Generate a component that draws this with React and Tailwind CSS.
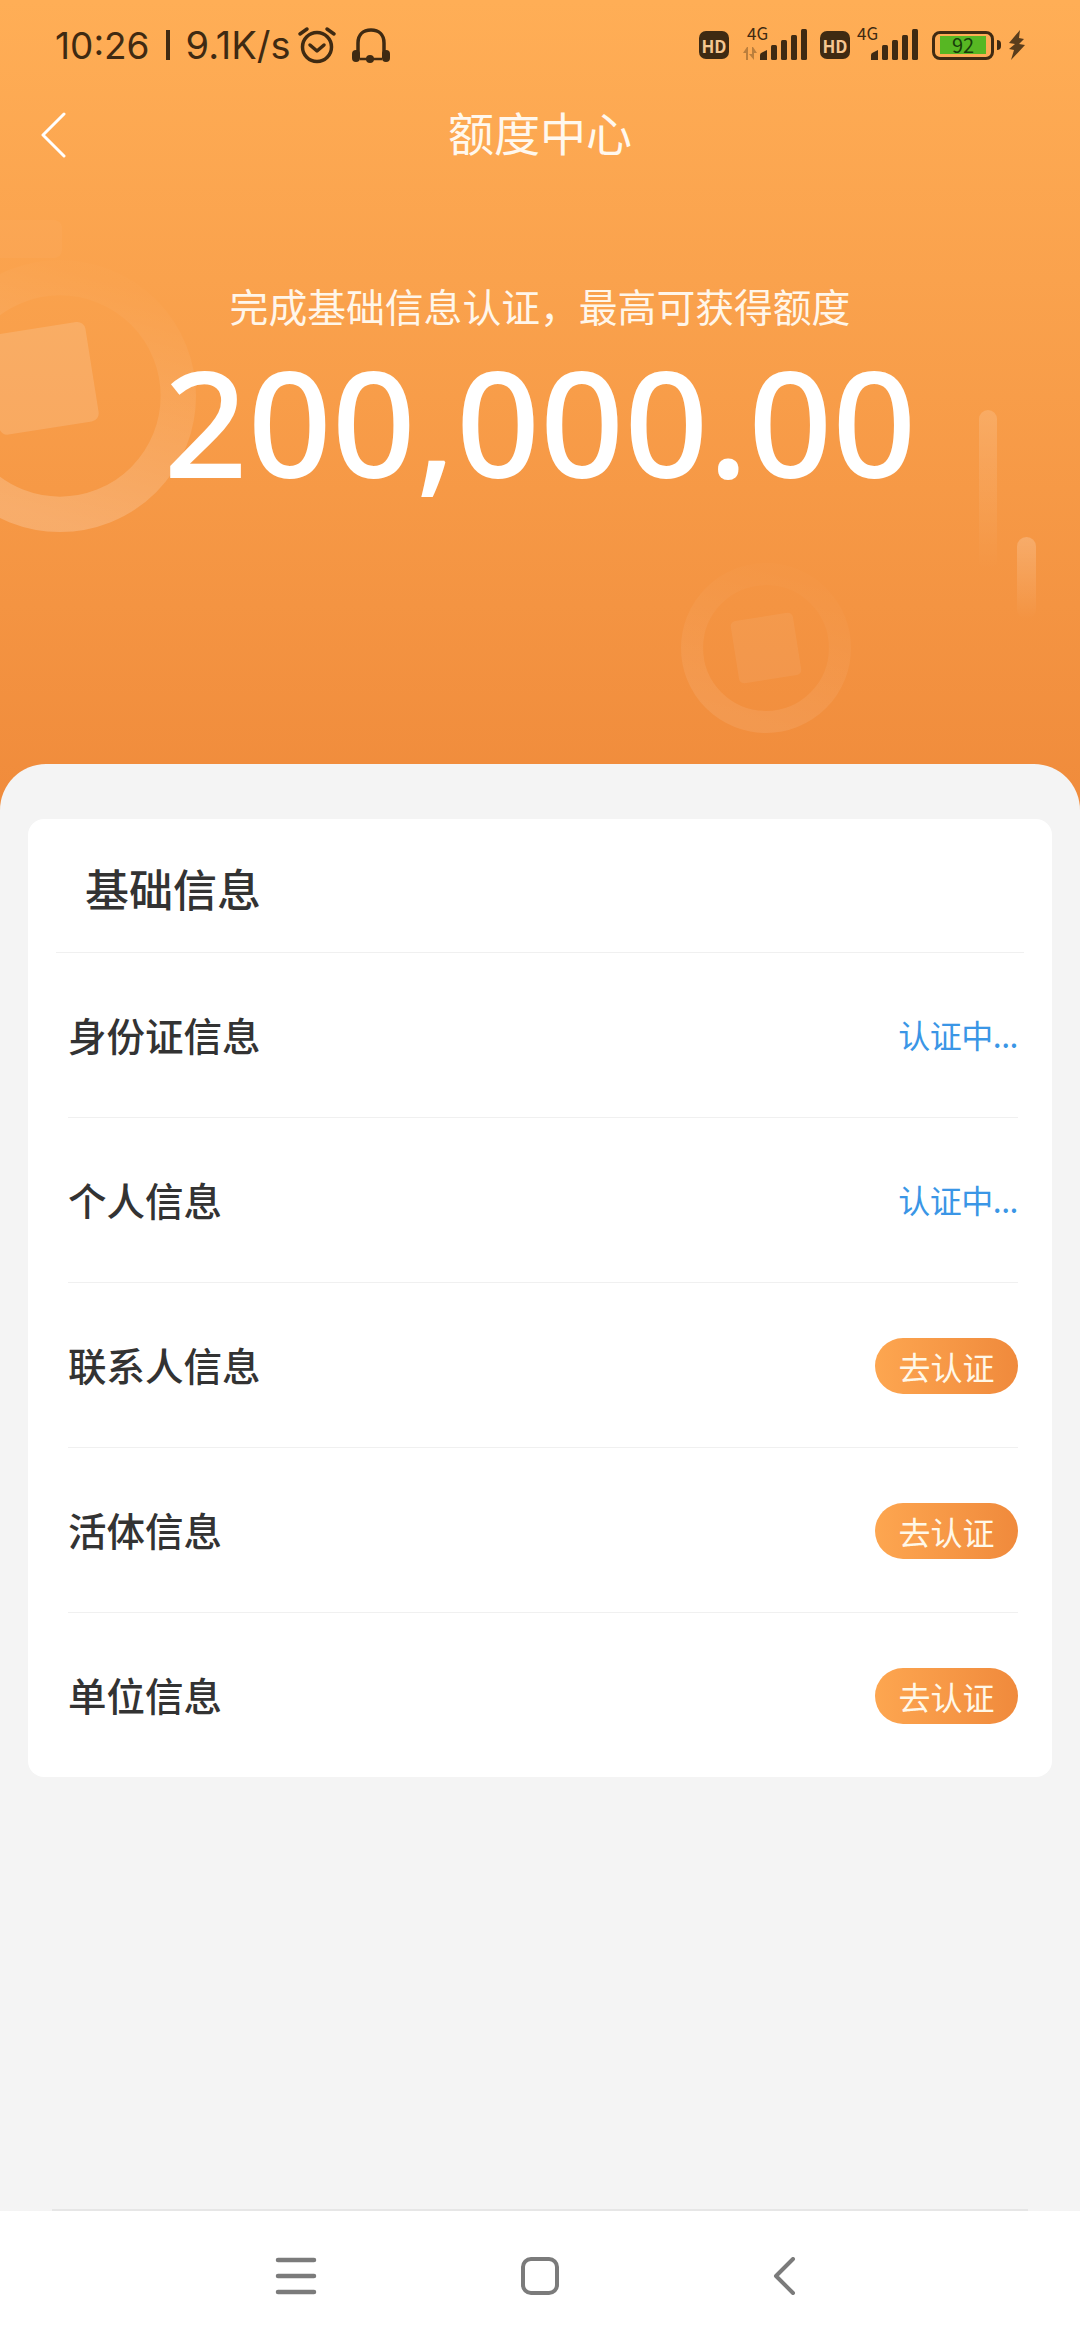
import { Fragment } from "react";

const rows = [
  { name: "身份证信息", pending: true },
  { name: "个人信息", pending: true },
  { name: "联系人信息", pending: false },
  { name: "活体信息", pending: false },
  { name: "单位信息", pending: false },
];

function Signal({ className }) {
  return (
    <svg className={className} width="48" height="31" viewBox="0 0 48 31" fill="#3f2a12">
      <path d="M1 31v-5q0-2 2-2.500l5-2.500v10z" />
      <rect x="12" y="16" width="6" height="15" rx="1.500" />
      <rect x="22" y="11" width="6" height="20" rx="1.500" />
      <rect x="32" y="6" width="6" height="25" rx="1.500" />
      <rect x="42" y="0" width="6" height="31" rx="1.500" />
    </svg>
  );
}

function HdBadge() {
  return (
    <div className="flex h-[28px] w-[30px] items-center justify-center rounded-[7px] bg-[#3f2a12] text-[17px] leading-none font-bold text-[#f5c690]">
      HD
    </div>
  );
}

function Coin({ className, id, opacity, squareAt }) {
  return (
    <svg className={className} viewBox="0 0 200 200" fill="none">
      <defs>
        <linearGradient id={id} x1="0.7" y1="0" x2="0.4" y2="1">
          <stop offset="0" stopColor="#fff" stopOpacity="0.01" />
          <stop offset="1" stopColor="#fff" stopOpacity={opacity} />
        </linearGradient>
      </defs>
      <circle cx="100" cy="100" r="87" stroke={`url(#${id})`} strokeWidth="26" />
      <rect
        x={squareAt}
        y={squareAt}
        width="74"
        height="74"
        rx="6"
        fill="#fff"
        fillOpacity={opacity * 0.7}
        transform={`rotate(-9 ${squareAt + 37} ${squareAt + 37})`}
      />
    </svg>
  );
}

export default function App() {
  return (
    <main
      className="flex h-[2340px] w-[1080px] flex-col overflow-hidden bg-[#f4f4f4]"
      style={{ fontFamily: '"Noto Sans CJK SC", "Noto Sans", sans-serif' }}
    >
      <section className="relative h-[812px] shrink-0 overflow-hidden bg-gradient-to-b from-[#ffae56] to-[#f08b3b]">
        {/* decoration behind the amount */}
        <div className="absolute top-[220px] left-0 h-[38px] w-[62px] rounded-r-lg bg-white/[0.03]" />
        <Coin id="coinA" opacity={0.2} squareAt={50} className="absolute top-[260px] left-[-76px] h-[272px] w-[272px]" />
        <Coin id="coinB" opacity={0.09} squareAt={63} className="absolute top-[563px] left-[681px] h-[170px] w-[170px]" />
        <div className="absolute top-[410px] left-[979px] h-[160px] w-[18px] rounded-full bg-gradient-to-b from-white/15 to-white/0" />
        <div className="absolute top-[537px] left-[1017px] h-[82px] w-[19px] rounded-full bg-gradient-to-b from-white/20 to-white/0" />

        <div className="relative flex h-[90px] items-center justify-between pr-[54px] pl-[55px] text-[#3f2a12]">
          <div className="flex items-center">
            <span className="text-[37px] leading-none" style={{ fontFamily: "Inter, sans-serif" }}>
              10:26
            </span>
            <span className="mx-[16px] h-[30px] w-[4px] bg-[#3f2a12]" />
            <span className="text-[38px] leading-none" style={{ fontFamily: "Inter, sans-serif" }}>
              9.1K/s
            </span>
            <svg className="ml-[6px]" width="40" height="38" viewBox="0 0 40 38" fill="none" stroke="#3f2a12" strokeWidth="3.500" strokeLinecap="round" strokeLinejoin="round">
              <circle cx="20" cy="21" r="14.500" />
              <path d="M13 19l7 6 7-6" />
              <path d="M3 8l7-5M37 8l-7-5" />
            </svg>
            <svg className="ml-[14px]" width="40" height="36" viewBox="0 0 40 36" fill="none">
              <path d="M7 27V16C7 8 12 3 20 3s13 5 13 13v11" stroke="#3f2a12" strokeWidth="3.500" />
              <rect x="1" y="23" width="8" height="12" rx="4" fill="#3f2a12" />
              <rect x="31" y="23" width="8" height="12" rx="4" fill="#3f2a12" />
              <path d="M9 32h22" stroke="#3f2a12" strokeWidth="2.500" />
              <circle cx="19" cy="32" r="4" fill="#3f2a12" />
            </svg>
          </div>

          <div className="flex items-center">
            <HdBadge />
            <div className="relative ml-[13px] h-[34px] w-[65px]">
              <span className="absolute top-[-4px] left-[5px] text-[17px] leading-none">4G</span>
              <svg className="absolute top-[19px] left-0" width="16" height="13" viewBox="0 0 16 13" fill="#3f2a12" fillOpacity="0.35">
                <path d="M4 13V6H1l4-6v0h1v13zM10 0v7H7l0 0 5 6h0V6h3L11 0z" />
              </svg>
              <Signal className="absolute top-[1px] left-[17px]" />
            </div>
            <div className="ml-[13px]">
              <HdBadge />
            </div>
            <div className="relative ml-[7px] h-[34px] w-[60px]">
              <span className="absolute top-[-4px] left-0 text-[17px] leading-none">4G</span>
              <Signal className="absolute top-[1px] left-[13px]" />
            </div>
            <div className="ml-[15px] flex items-center">
              <div className="flex h-[29px] w-[62px] items-center justify-center rounded-[8px] border-[3px] border-[#3f2a12]">
                <div className="flex h-[18px] w-[46px] items-center justify-center bg-[#57b723] text-[20px] leading-none text-[#173d0a]">
                  92
                </div>
              </div>
              <div className="ml-[3px] h-[10px] w-[4px] rounded-r-sm bg-[#3f2a12]" />
            </div>
            <svg className="ml-[7px]" width="18" height="30" viewBox="0 0 18 30" fill="#5a3d1c">
              <path d="M12 0L1 13l6 1-6 5 5 1-3 10 14-15-6-1 5-5-5-1z" />
            </svg>
          </div>
        </div>

        <div className="relative flex h-[90px] items-center justify-center pb-[8px]">
          <svg className="absolute top-[22px] left-[40px]" width="26" height="46" viewBox="0 0 26 46" fill="none" stroke="#fff" strokeWidth="3" strokeLinecap="round" strokeLinejoin="round">
            <path d="M24 2L3 23l21 21" />
          </svg>
          <h1 className="text-[46px] leading-none font-normal text-[#fff8ee]">额度中心</h1>
        </div>

        <div className="relative mt-[106px] flex flex-col items-center">
          <p className="text-[38.800px] leading-none font-normal text-[#fff6ea]">完成基础信息认证，最高可获得额度</p>
          <p className="mt-[23px] text-[147px] leading-none font-medium text-white" style={{ fontFamily: '"Noto Sans", sans-serif' }}>
            200,000.00
          </p>
        </div>
      </section>

      <section className="z-10 mt-[-48px] flex flex-1 flex-col rounded-t-[46px] bg-[#f4f4f4] px-[28px] pt-[55px]">
        <div className="rounded-[16px] bg-white">
          <div className="mx-[28px] flex h-[134px] items-center border-b border-[#f0f0f0] pt-[5px] pl-[29px]">
            <h2 className="text-[44px] leading-none font-medium text-[#333]">基础信息</h2>
          </div>
          {rows.map((row, index) => (
            <Fragment key={row.name}>
              {index > 0 && <div className="mr-[34px] ml-[40px] h-px bg-[#f0f0f0]" />}
              <div className="mr-[34px] ml-[40px] flex h-[164px] items-center justify-between">
                <span className="mb-[2px] text-[38.500px] leading-none font-medium text-[#333]">{row.name}</span>
                {row.pending ? (
                  <span className="mb-[2px] text-[32px] leading-none tracking-[-0.5px] text-[#3a96e6]">认证中...</span>
                ) : (
                  <button className="mt-[2px] flex h-[56px] w-[143px] items-center justify-center rounded-full bg-gradient-to-r from-[#fda650] to-[#f08a3c] text-[32px] leading-none text-[#fff8e8]">
                    去认证
                  </button>
                )}
              </div>
            </Fragment>
          ))}
        </div>
      </section>

      <div className="mx-[52px] h-[2px] shrink-0 bg-[#e6e6e6]" />
      <nav className="flex h-[129px] shrink-0 items-start justify-center bg-white pt-[46px]">
        <div className="flex w-[244px] justify-center">
          <svg width="42" height="38" viewBox="0 0 42 38" fill="none" stroke="#7b7b7b" strokeWidth="4.500" strokeLinecap="round">
            <path d="M3 3h36M3 19h36M3 35h36" />
          </svg>
        </div>
        <div className="flex w-[244px] justify-center">
          <div className="h-[38px] w-[38px] rounded-[10px] border-[4px] border-[#7b7b7b]" />
        </div>
        <div className="flex w-[244px] justify-center">
          <svg width="24" height="38" viewBox="0 0 24 38" fill="none" stroke="#7b7b7b" strokeWidth="4" strokeLinecap="round" strokeLinejoin="round">
            <path d="M21 2L4 19l17 17" />
          </svg>
        </div>
      </nav>
    </main>
  );
}
